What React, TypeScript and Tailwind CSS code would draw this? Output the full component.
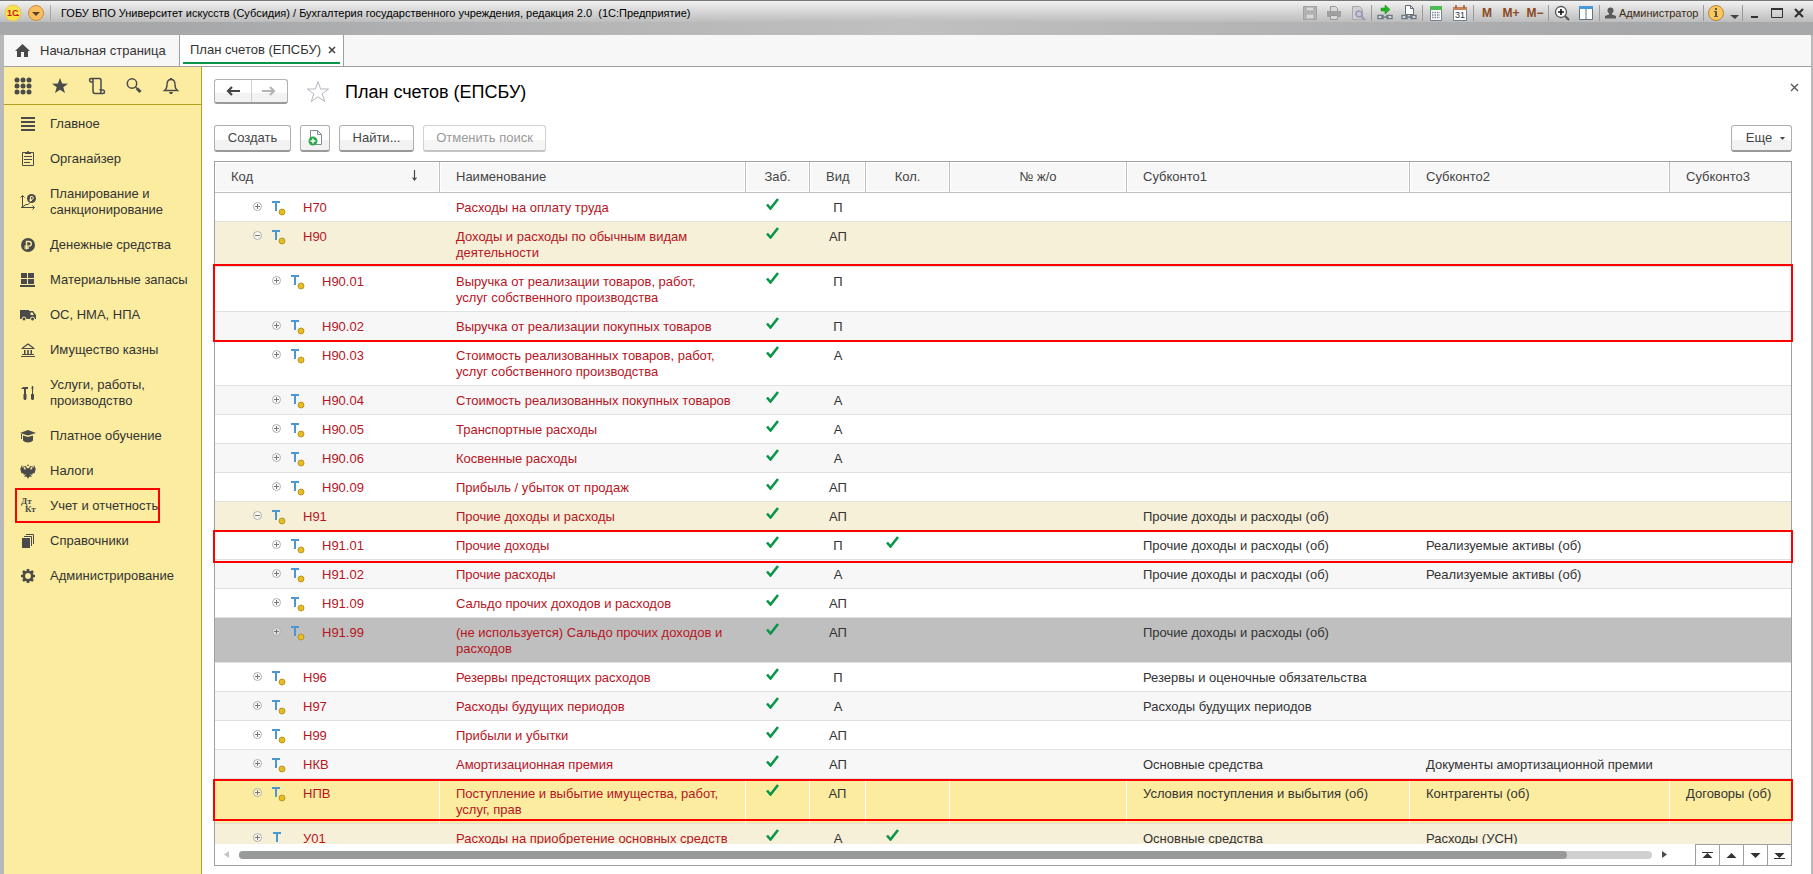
import { useState } from "react";
import type { ReactNode } from "react";

interface Account {
  code: string;
  name: string;
  kind: string;
  level: 0 | 1;
  open?: boolean;
  quantity?: boolean;
  plain?: boolean;
  tone?: "group" | "unused" | "selected";
  sub1?: string;
  sub2?: string;
  sub3?: string;
}

const ACCOUNTS: Account[] = [
  { code: "Н70", name: "Расходы на оплату труда", kind: "П", level: 0 },
  { code: "Н90", name: "Доходы и расходы по обычным видам деятельности", kind: "АП", level: 0, open: true, tone: "group" },
  { code: "Н90.01", name: "Выручка от реализации товаров, работ, услуг\u00a0собственного производства", kind: "П", level: 1 },
  { code: "Н90.02", name: "Выручка от реализации покупных товаров", kind: "П", level: 1 },
  { code: "Н90.03", name: "Стоимость реализованных товаров, работ, услуг\u00a0собственного производства", kind: "А", level: 1 },
  { code: "Н90.04", name: "Стоимость реализованных покупных товаров", kind: "А", level: 1 },
  { code: "Н90.05", name: "Транспортные расходы", kind: "А", level: 1 },
  { code: "Н90.06", name: "Косвенные расходы", kind: "А", level: 1 },
  { code: "Н90.09", name: "Прибыль / убыток от продаж", kind: "АП", level: 1 },
  { code: "Н91", name: "Прочие доходы и расходы", kind: "АП", level: 0, open: true, tone: "group", sub1: "Прочие доходы и расходы (об)" },
  { code: "Н91.01", name: "Прочие доходы", kind: "П", level: 1, quantity: true, sub1: "Прочие доходы и расходы (об)", sub2: "Реализуемые активы (об)" },
  { code: "Н91.02", name: "Прочие расходы", kind: "А", level: 1, sub1: "Прочие доходы и расходы (об)", sub2: "Реализуемые активы (об)" },
  { code: "Н91.09", name: "Сальдо прочих доходов и расходов", kind: "АП", level: 1 },
  { code: "Н91.99", name: "(не используется) Сальдо прочих доходов и расходов", kind: "АП", level: 1, tone: "unused", sub1: "Прочие доходы и расходы (об)" },
  { code: "Н96", name: "Резервы предстоящих расходов", kind: "П", level: 0, sub1: "Резервы и оценочные обязательства" },
  { code: "Н97", name: "Расходы будущих периодов", kind: "А", level: 0, sub1: "Расходы будущих периодов" },
  { code: "Н99", name: "Прибыли и убытки", kind: "АП", level: 0 },
  { code: "НКВ", name: "Амортизационная премия", kind: "АП", level: 0, sub1: "Основные средства", sub2: "Документы амортизационной премии" },
  { code: "НПВ", name: "Поступление и выбытие имущества, работ, услуг, прав", kind: "АП", level: 0, tone: "selected", sub1: "Условия поступления и выбытия (об)", sub2: "Контрагенты (об)", sub3: "Договоры (об)" },
  { code: "У01", name: "Расходы на приобретение основных средств", kind: "А", level: 0, quantity: true, plain: true, tone: "group", sub1: "Основные средства", sub2: "Расходы (УСН)" },
];

// ─── Sidebar icons ────────────────────────────────
function Icon({ children }: { children: ReactNode }) {
  return (
    <svg width="16" height="16" viewBox="0 0 16 16" fill="#4a4a4a" className="shrink-0" aria-hidden="true">
      {children}
    </svg>
  );
}

const SECTIONS: { title: string; icon: ReactNode; marked?: boolean }[] = [
  { title: "Главное", icon: <Icon><path d="M1 1h14v2H1zM1 5h14v2H1zM1 9h14v2H1zM1 13h14v2H1z" /></Icon> },
  {
    title: "Органайзер",
    icon: (
      <Icon>
        <path d="M2.500 1.500h11v13h-11z" fill="none" stroke="#4a4a4a" />
        <path d="M5 3V1h2a1 1 0 0 1 2 0h2v2zM4 5h8v1H4zM4 8h8v1H4zM4 11h6v1H4z" />
      </Icon>
    ),
  },
  {
    title: "Планирование и санкционирование",
    icon: (
      <Icon>
        <path d="M2.500 2v12M1 13.500h13M0.500 3.500l2-2 2 2M12.500 11.500l2 2-2 2M3 12.500l3-2h2l2-2" fill="none" stroke="#4a4a4a" />
        <circle cx="11.500" cy="4.500" r="4.500" />
        <path d="M10.500 7.500v-5H12a1.400 1.400 0 0 1 0 2.800H9.500M9.500 6.500H12" fill="none" stroke="#fbeca0" />
      </Icon>
    ),
  },
  {
    title: "Денежные средства",
    icon: (
      <Icon>
        <circle cx="8" cy="8" r="7" />
        <path d="M6.500 12.500v-8H9a2.300 2.300 0 0 1 0 4.600H4.500M4.500 11H9" fill="none" stroke="#fbeca0" strokeWidth="1.400" />
      </Icon>
    ),
  },
  { title: "Материальные запасы", icon: <Icon><path d="M1 1h6v5H1zM8 1h6v5H8zM1 7h6v5H1zM8 7h6v5H8zM0 13h15v2H0z" /></Icon> },
  {
    title: "ОС, НМА, НПА",
    icon: (
      <Icon>
        <path d="M0 3h9v9H0zM9 4h4l3 4v4H9z" />
        <path d="M10.500 5.500h2l1.500 2.500h-3.500z" fill="#fbeca0" />
        <circle cx="4" cy="12" r="2" stroke="#fbeca0" />
        <circle cx="12.500" cy="12" r="2" stroke="#fbeca0" />
      </Icon>
    ),
  },
  {
    title: "Имущество казны",
    icon: (
      <Icon>
        <path d="M1.500 6.500h13M2.500 6L8 2l5.500 4M1 14.500h14M2 12.500h12" fill="none" stroke="#4a4a4a" strokeWidth="1.200" />
        <path d="M4 8h1.500v4H4zM7.200 8h1.600v4H7.200zM10.500 8H12v4h-1.500z" />
      </Icon>
    ),
  },
  {
    title: "Услуги, работы, производство",
    icon: (
      <Icon>
        <path d="M1 4l2-2h5v2H6v5H4V4zM3.500 9h3v5l-1 1h-1l-1-1zM11.500 3l.5-2h1l.5 2-.5 2v4h-1V5zM11 9h3v5l-1 1h-1l-1-1z" />
      </Icon>
    ),
  },
  {
    title: "Платное обучение",
    icon: (
      <Icon>
        <path d="M0 5l8-3 8 3-8 2.500zM3 7.500l5 1.500 5-1.500v5c-2 2.500-8 2.500-10 0zM1 6h1v5H1z" />
      </Icon>
    ),
  },
  {
    title: "Налоги",
    icon: (
      <Icon>
        <path d="M7 3l1-2 1 2zM6.500 4.500C6.500 3 4.500 2.500 4 4l1.500.5V7L4 6 3 2 2.500 5 1 2v3.500L0 5l1 3.500.5 2L3 10 4 12l2-1-2 3 2-.5L7 14l1 2 1-2 1-.5 2 .5-2-3 2 1 1-2 1.500.5.5-2 1-3.500-1 .5V2l-1.500 3L13 2l-1 4-1.500 1V4.500L12 4c-.500-1.500-2.500-1-2.500.5L8 5.500z" />
      </Icon>
    ),
  },
  {
    title: "Учет и отчетность",
    marked: true,
    icon: (
      <svg width="16" height="16" viewBox="0 0 16 16" className="shrink-0" aria-hidden="true" fill="#4a4a4a" fontFamily="Liberation Serif, serif" fontWeight="bold" fontSize="9">
        <text x="1" y="6">Дт</text>
        <text x="5" y="14">Кт</text>
      </svg>
    ),
  },
  {
    title: "Справочники",
    icon: (
      <Icon>
        <path d="M2 5h8v10H2z" />
        <path d="M4 3.500h7.500V13M6 1.500h7.500V11" fill="none" stroke="#4a4a4a" />
      </Icon>
    ),
  },
  {
    title: "Администрирование",
    icon: (
      <Icon>
        <circle cx="8" cy="8" r="4.200" fill="none" stroke="#4a4a4a" strokeWidth="2.600" />
        <path d="M8 1v3M8 12v3M1 8h3M12 8h3M3 3l2 2M11 11l2 2M13 3l-2 2M5 11l-2 2" stroke="#4a4a4a" strokeWidth="2.600" />
      </Icon>
    ),
  },
];

const TOOLS: { label: string; icon: ReactNode }[] = [
  {
    label: "Разделы",
    icon: (
      <g fill="#4a4a4a">
        {[3, 9, 15].map((y) => [3, 9, 15].map((x) => <circle key={`${x}-${y}`} cx={x} cy={y} r="2.500" />))}
      </g>
    ),
  },
  { label: "Избранное", icon: <path d="M9 1l2.100 5.500 5.900.2-4.700 3.600 1.700 5.700-5-3.300-5 3.300 1.700-5.700L1 6.700l5.900-.2z" fill="#4a4a4a" /> },
  {
    label: "История",
    icon: <path d="M5 5H3C1 4.500 1 1.500 3 1.500h8.500c1 0 1.500 1 1.500 2V13M3 1.500c1.500 0 2 1 2 2V14c0 1.500 1 2.500 2 2.500h8c2 0 2-3.500 0-3.500h-2.500c1 1 .500 3-1 3.500" fill="none" stroke="#4a4a4a" strokeWidth="1.500" />,
  },
  {
    label: "Поиск",
    icon: (
      <g fill="none" stroke="#4a4a4a">
        <circle cx="7" cy="6.500" r="4.700" strokeWidth="1.500" />
        <path d="M10.500 10l1.500 1.500" strokeWidth="1.500" />
        <path d="M12 11.500l3.500 3.500" strokeWidth="3" />
      </g>
    ),
  },
  {
    label: "Оповещения",
    icon: (
      <g>
        <path d="M2.500 13.500c2-1.500 2.500-3 2.500-6C5 4.500 6.500 2.500 9 2.500s4 2 4 5c0 3 .500 4.500 2.500 6z" fill="none" stroke="#4a4a4a" strokeWidth="1.400" />
        <path d="M8 1h2v2H8zM7 15h4l-1 2H8z" fill="#4a4a4a" />
      </g>
    ),
  },
];

// ─── Window title bar ────────────────────────────────
function BarButton({ label, children, className = "w-6" }: { label: string; children: ReactNode; className?: string }) {
  return (
    <button type="button" aria-label={label} className={`flex h-5 shrink-0 items-center justify-center ${className}`}>
      {children}
    </button>
  );
}

function Divider() {
  return <span className="mx-px h-4 w-px shrink-0 bg-[#9a9a9a]" />;
}

function Glyph({ children }: { children: ReactNode }) {
  return (
    <svg width="16" height="16" viewBox="0 0 16 16" aria-hidden="true">
      {children}
    </svg>
  );
}

function ChainLinks() {
  return (
    <g fill="none">
      <path d="M1 10.500h5v3H1zM10 10.500h5v3h-5z" fill="#fff" stroke="#6d7780" strokeWidth="1.400" />
      <path d="M4 12h8" stroke="#6d7780" strokeWidth="1.400" />
    </g>
  );
}

function TitleBar() {
  return (
    <header className="flex h-[22px] shrink-0 items-center border-t border-[#767676] bg-linear-to-b from-[#f2f2f2] via-[#d6d6d6] to-[#bdbdbd] pt-[2px] pl-1">
      <svg width="18" height="18" viewBox="0 0 18 18" className="mr-[5px] shrink-0" aria-hidden="true">
        <circle cx="9" cy="9" r="8" fill="#fbe24a" stroke="#e0c860" />
        <text x="3" y="12" fontFamily="Liberation Sans, sans-serif" fontWeight="bold" fontSize="9" fill="#d0201c">1С</text>
        <path d="M11 11.500h4" stroke="#d0201c" />
      </svg>
      <BarButton label="Главное меню" className="w-[18px]">
        <svg width="18" height="18" viewBox="0 0 18 18" aria-hidden="true">
          <circle cx="9" cy="9" r="7.500" fill="#fbbf62" stroke="#c98d3c" />
          <path d="M5 8h8l-4 4z" fill="#5b4426" />
        </svg>
      </BarButton>
      <span className="mr-[10px] ml-[5px] h-4 w-px shrink-0 bg-[#a8a8a8]" />
      <h1 className="min-w-0 flex-1 truncate text-[11px] text-black">
        ГОБУ ВПО Университет искусств (Субсидия) / Бухгалтерия государственного учреждения, редакция 2.0&nbsp; (1С:Предприятие)
      </h1>
      <BarButton label="Сохранить">
        <Glyph>
          <path d="M1.500 1.500h13v13h-13z" fill="#b4b4b4" stroke="#a0a0a0" />
          <path d="M4 2h8v4H4zM4 9h8v5H4z" fill="#d8d8d8" stroke="#a6a6a6" />
        </Glyph>
      </BarButton>
      <BarButton label="Печать">
        <Glyph>
          <path d="M1 6h14v6H1z" fill="#a0a0a0" />
          <path d="M4.500 6V1.500h5l2 2V6M4.500 10.500h7v4h-7z" fill="#d8d8d8" stroke="#969696" />
        </Glyph>
      </BarButton>
      <BarButton label="Просмотр">
        <Glyph>
          <path d="M2.500 1.500h7l3 3v10h-10z" fill="#d0d0d0" stroke="#a8a8a8" />
          <circle cx="9" cy="9" r="3" fill="#c9c4dc" stroke="#9d96b4" strokeWidth="1.500" />
          <path d="M11 11l4 4" stroke="#9d96b4" strokeWidth="2" />
        </Glyph>
      </BarButton>
      <Divider />
      <BarButton label="Перейти по ссылке">
        <Glyph>
          <path d="M4 3h4V0l5 4.500L8 9V6H4z" fill="#22b422" stroke="#148014" strokeWidth=".5" />
          <ChainLinks />
        </Glyph>
      </BarButton>
      <BarButton label="Получить ссылку">
        <Glyph>
          <path d="M4.500 9.500V.5h5l3 3v6z" fill="#fff" stroke="#5d6b7a" />
          <path d="M9.500 .5v3h3" fill="none" stroke="#5d6b7a" />
          <ChainLinks />
        </Glyph>
      </BarButton>
      <Divider />
      <BarButton label="Калькулятор">
        <Glyph>
          <path d="M2.500 1.500h11v14h-11z" fill="#fff" stroke="#718391" />
          <path d="M2 1h12v4H2z" fill="#4dbb53" />
          <path d="M4 7.500h8M4 10h8M4 12.500h8" stroke="#7c8790" strokeWidth="1.500" strokeDasharray="1.500 1" />
        </Glyph>
      </BarButton>
      <BarButton label="Календарь">
        <Glyph>
          <path d="M1.500 2.500h13v13h-13z" fill="#fff" stroke="#718391" />
          <path d="M1 2h14v3H1z" fill="#c58457" />
          <path d="M4 0v3M12 0v3" stroke="#9b5b33" strokeWidth="1.500" />
          <text x="3" y="13" fontFamily="Liberation Sans, sans-serif" fontSize="9" fill="#333">31</text>
        </Glyph>
      </BarButton>
      <Divider />
      <BarButton label="M"><span className="text-xs font-bold text-[#8a4a22]">M</span></BarButton>
      <BarButton label="M+"><span className="text-xs font-bold text-[#8a4a22]">M+</span></BarButton>
      <BarButton label="M-"><span className="text-xs font-bold text-[#8a4a22]">M−</span></BarButton>
      <Divider />
      <BarButton label="Масштаб">
        <Glyph>
          <circle cx="7" cy="7" r="5.500" fill="#fff" stroke="#555" strokeWidth="1.300" />
          <path d="M4 7h6M7 4v6" stroke="#111" strokeWidth="1.600" />
          <path d="M11 11l4 4" stroke="#555" strokeWidth="2.200" />
        </Glyph>
      </BarButton>
      <BarButton label="Панели">
        <Glyph>
          <path d="M1.500 1.500h13v13h-13z" fill="#fff" stroke="#5d7385" />
          <path d="M1 1h14v3H1z" fill="#4897d6" />
          <path d="M8 4v11" stroke="#5d7385" />
        </Glyph>
      </BarButton>
      <Divider />
      <button type="button" className="flex h-5 w-[101px] shrink-0 items-center gap-[3px] pl-1 text-[11px] text-[#3b2a12]">
        <svg width="11" height="12" viewBox="0 0 11 12" fill="#5a5a5a" className="shrink-0" aria-hidden="true">
          <circle cx="5.500" cy="3.500" r="3" />
          <path d="M4 6h3v1.500l4 1.500v2.500H0V9l4-1.500z" />
        </svg>
        Администратор
      </button>
      <Divider />
      <BarButton label="Информация" className="w-[22px]">
        <svg width="18" height="18" viewBox="0 0 18 18" aria-hidden="true">
          <circle cx="9" cy="9" r="7.500" fill="#fcc75c" stroke="#b9863a" />
          <path d="M8 4h2v2H8zM7 7h3v5h1v1H7v-1h1V8H7z" fill="#5f5747" />
        </svg>
      </BarButton>
      <BarButton label="Меню" className="w-[14px]">
        <svg width="9" height="14" viewBox="0 0 9 14" aria-hidden="true"><path d="M0 9h9l-4 4z" fill="#444" /></svg>
      </BarButton>
      <Divider />
      <div className="flex pr-[3px]">
        <BarButton label="Свернуть" className="w-[22px]">
          <svg width="12" height="12" viewBox="0 0 12 12" aria-hidden="true"><path d="M2 9h7v2H2z" fill="#333" /></svg>
        </BarButton>
        <BarButton label="Развернуть" className="w-[22px]">
          <svg width="12" height="12" viewBox="0 0 12 12" aria-hidden="true"><path d="M.5 1.500h11v9H.5z" fill="none" stroke="#333" /><path d="M0 1h12v2H0z" fill="#333" /></svg>
        </BarButton>
        <BarButton label="Закрыть" className="w-[22px]">
          <svg width="12" height="12" viewBox="0 0 12 12" aria-hidden="true"><path d="M2 2l8 8M10 2l-8 8" stroke="#333" strokeWidth="2.200" /></svg>
        </BarButton>
      </div>
    </header>
  );
}

// ─── Section panel ────────────────────────────────
function Sidebar() {
  return (
    <aside className="w-[198px] shrink-0 border-r border-[#b5a01e] bg-[#fbeca0]">
      <div className="flex h-[38px] items-center border-b border-[#b5a01e]">
        {TOOLS.map((tool) => (
          <button key={tool.label} type="button" aria-label={tool.label} className="flex w-[37px] justify-center">
            <svg width="18" height="18" viewBox="0 0 18 18" aria-hidden="true">{tool.icon}</svg>
          </button>
        ))}
      </div>
      <nav className="flex flex-col pt-px">
        {SECTIONS.map((section) => (
          <a key={section.title} href="#" className="relative flex items-center gap-[14px] pt-[10px] pr-12 pb-[9px] pl-4 whitespace-nowrap text-[#333]">
            {section.icon}
            <span className={section.title.length > 20 ? "whitespace-normal" : ""}>{section.title}</span>
            {section.marked && <span className="absolute inset-y-0 left-[11px] w-[145px] border-2 border-[#ff0000]" />}
          </a>
        ))}
      </nav>
    </aside>
  );
}

// ─── Account table ────────────────────────────────
function Check() {
  return (
    <svg width="13" height="12" viewBox="0 0 13 12" role="img" aria-label="Да" className="block">
      <path d="M1 6.500l3.500 4L12 1" fill="none" stroke="#0a9648" strokeWidth="2.600" />
    </svg>
  );
}

function Expander({ open }: { open?: boolean }) {
  return (
    <svg width="9" height="9" viewBox="0 0 9 9" aria-hidden="true" className="mt-[2px] block">
      <circle cx="4.500" cy="4.500" r="4" fill="#fff" fillOpacity=".5" stroke="#a8a8a8" strokeWidth=".9" />
      <path d={open ? "M2 4.500h5" : "M2 4.500h5M4.500 2v5"} stroke="#777" />
    </svg>
  );
}

function AccountIcon({ plain }: { plain?: boolean }) {
  return (
    <svg width="14" height="15" viewBox="0 0 14 15" aria-hidden="true" className="mt-px block shrink-0">
      <path d={plain ? "M1 0h8v2H6v8H4V2H1z" : "M0 0h8v2H5v8H3V2H0z"} fill="#4c97d0" />
      {!plain && <circle cx="10" cy="11" r="3" fill="#e5bc24" stroke="#b3921f" strokeWidth=".9" />}
    </svg>
  );
}

function rowTone(account: Account, index: number) {
  if (account.tone === "group") return "bg-[#f7f0d9]";
  if (account.tone === "unused") return "bg-[#bfbfbf]";
  if (account.tone === "selected") return "bg-[#fbeca0]";
  return index % 2 ? "bg-[#f7f7f7]" : "bg-white";
}

const HEAD = "h-[31px] border-r border-b border-[#c0c0c0] bg-[#f7f7f7] px-4 font-normal shadow-[inset_0_0_0_1px_#fff]";

function AccountTable() {
  const [selected, setSelected] = useState("НПВ");

  return (
    <table className="w-full table-fixed border-separate border-spacing-0 text-left">
      <colgroup>
        <col className="w-[225px]" />
        <col className="w-[306px]" />
        <col className="w-[64px]" />
        <col className="w-[56px]" />
        <col className="w-[84px]" />
        <col className="w-[177px]" />
        <col className="w-[283px]" />
        <col className="w-[260px]" />
        <col />
      </colgroup>
      <thead className="text-[#444]">
        <tr>
          <th className={HEAD}>
            <span className="flex items-center justify-between">
              Код
              <svg width="7" height="12" viewBox="0 0 7 12" aria-hidden="true" className="mr-[5px] mb-[2px]">
                <path d="M3.500 0v10M1.500 7.500l2 2.500 2-2.500" fill="none" stroke="#444" strokeWidth="1.200" />
              </svg>
            </span>
          </th>
          <th className={HEAD}>Наименование</th>
          <th className={`${HEAD} text-center`}>Заб.</th>
          <th className={`${HEAD} text-center`}>Вид</th>
          <th className={`${HEAD} text-center`}>Кол.</th>
          <th className={`${HEAD} text-center`}>№ ж/о</th>
          <th className={HEAD}>Субконто1</th>
          <th className={HEAD}>Субконто2</th>
          <th className="h-[31px] border-b border-[#c0c0c0] bg-[#f7f7f7] px-4 font-normal">Субконто3</th>
        </tr>
      </thead>
      <tbody>
        {ACCOUNTS.map((account, i) => {
          const line = account.tone === "selected" ? "border-r border-r-white last:border-r-0" : "";
          const base = `border-b border-b-[#e0e0e0] pb-[5px] align-top ${line}`;
          const cell = `${base} pt-[7px]`;
          return (
            <tr
              key={account.code}
              aria-selected={selected === account.code}
              onClick={() => setSelected(account.code)}
              className={`${rowTone(account, i)} text-[#333]`}
            >
              <td className={cell}>
                <div className={`flex text-[#b8141e] ${account.level ? "pl-[57px]" : "pl-[38px]"}`}>
                  <Expander open={account.open} />
                  <span className="w-[10px]" />
                  <AccountIcon plain={account.plain} />
                  <span className="pl-[17px]">{account.code}</span>
                </div>
              </td>
              <td className={`${cell} pr-3 pl-4 text-[#b8141e]`}>{account.name}</td>
              <td className={`${base} pt-[5px] pl-5`}><Check /></td>
              <td className={`${cell} text-center`}>{account.kind}</td>
              <td className={`${base} pt-[5px] pl-5`}>{account.quantity && <Check />}</td>
              <td className={cell} />
              <td className={`${cell} pl-4`}>{account.sub1}</td>
              <td className={`${cell} pl-4`}>{account.sub2}</td>
              <td className={`${cell} pl-4`}>{account.sub3}</td>
            </tr>
          );
        })}
      </tbody>
    </table>
  );
}

const PAGERS = [
  { label: "В начало", path: "M0 0h11v1H0zM5.500 1l5 5h-10z" },
  { label: "Вверх", path: "M5.500 1l5 5h-10z" },
  { label: "Вниз", path: "M5.500 6l5-5h-10z" },
  { label: "В конец", path: "M0 6h11v1H0zM5.500 6l5-5h-10z" },
];

function TableFooter() {
  return (
    <div className="flex h-[21px] shrink-0 bg-white">
      <div className="flex flex-1 items-center">
        <svg width="5" height="7" viewBox="0 0 5 7" className="mr-[10px] ml-[9px]" aria-hidden="true"><path d="M5 0v7L0 3.500z" fill="#c4c4c4" /></svg>
        <div className="h-2 flex-1 rounded-full bg-[#d0d0d0]">
          <div className="h-2 w-[94%] rounded-full bg-[#989a99]" />
        </div>
        <svg width="5" height="7" viewBox="0 0 5 7" className="mr-[28px] ml-[10px]" aria-hidden="true"><path d="M0 0v7l5-3.500z" fill="#4a4a4a" /></svg>
      </div>
      {PAGERS.map((pager) => (
        <button key={pager.label} type="button" aria-label={pager.label} className="flex w-6 items-center justify-center border-t border-l border-[#a0a0a0]">
          <svg width="11" height="7" viewBox="0 0 11 7" fill="#333" aria-hidden="true"><path d={pager.path} /></svg>
        </button>
      ))}
    </div>
  );
}

const BUTTON =
  "flex h-[27px] items-center justify-center rounded-[3px] border border-b-2 border-[#b0b0b0] border-b-[#999] bg-linear-to-b from-white from-60% to-[#f2f2f2] to-60% text-[#444]";

export default function App() {
  return (
    <div className="flex h-screen flex-col overflow-hidden bg-[#b8b8b8] font-['Liberation_Sans',Arial,sans-serif] text-[13px] leading-4">
      <TitleBar />
      <div className="h-[13px] shrink-0 bg-linear-to-r from-[#a7a8aa] from-10% via-[#c0c0c0] via-50% to-[#a7a8aa] to-90%" />

      <div className="mr-[2px] ml-1 flex min-h-0 flex-1 flex-col bg-white">
        {/* Open pages */}
        <div className="flex h-8 shrink-0 border-b border-[#a0a0a0] bg-[#f7f7f7]">
          <button type="button" className="flex w-[175px] items-center gap-[10px] pl-[11px] text-[#333]">
            <svg width="15" height="13" viewBox="0 0 15 13" fill="#4a4a4a" aria-hidden="true">
              <path d="M7.500 0L15 7h-2v6H9V8H6v5H2V7H0z" />
            </svg>
            Начальная страница
          </button>
          <div className="flex w-[165px] flex-col border-x border-[#a0a0a0] bg-white px-[3px] text-[#333]">
            <div className="flex flex-1 items-center justify-between pt-[3px] pr-1 pl-[7px]">
              <button type="button">План счетов (ЕПСБУ)</button>
              <button type="button" aria-label="Закрыть вкладку">
                <svg width="8" height="8" viewBox="0 0 8 8" aria-hidden="true"><path d="M1 1l6 6M7 1L1 7" stroke="#444" strokeWidth="1.600" /></svg>
              </button>
            </div>
            <div className="mb-[2px] h-[2px] bg-[#0a9648]" />
          </div>
        </div>

        <div className="flex min-h-0 flex-1">
          <Sidebar />

          <main className="flex min-w-0 flex-1 flex-col pr-[19px] pb-2 pl-3">
            <div className="mt-3 flex h-[25px] items-center">
              <div className="flex h-[25px] w-[74px] rounded-[3px] border border-b-2 border-[#b0b0b0] border-b-[#999] bg-linear-to-b from-white from-60% to-[#f2f2f2] to-60%">
                <button type="button" aria-label="Назад" className="flex flex-1 items-center justify-center border-r border-[#d0d0d0]">
                  <svg width="14" height="10" viewBox="0 0 14 10" fill="none" stroke="#444" strokeWidth="2.200" aria-hidden="true"><path d="M14 5H2M6 1L2 5l4 4" /></svg>
                </button>
                <button type="button" aria-label="Вперед" disabled className="flex flex-1 items-center justify-center">
                  <svg width="14" height="10" viewBox="0 0 14 10" fill="none" stroke="#b4b4b4" strokeWidth="2.200" aria-hidden="true"><path d="M0 5h12M8 1l4 4-4 4" /></svg>
                </button>
              </div>
              <button type="button" aria-label="В избранное" className="ml-[18px]">
                <svg width="24" height="23" viewBox="0 0 24 23" fill="none" stroke="#b5b5c0" aria-hidden="true">
                  <path d="M12 1.500l2.600 7.500h8l-6.400 4.800 2.500 7.700L12 16.800l-6.700 4.700 2.500-7.700L1.400 9h8z" />
                </svg>
              </button>
              <h2 className="ml-[15px] text-lg text-black">План счетов (ЕПСБУ)</h2>
              <button type="button" aria-label="Закрыть" className="-mr-[7px] mb-2 ml-auto">
                <svg width="9" height="9" viewBox="0 0 9 9" aria-hidden="true"><path d="M1 1l7 7M8 1L1 8" stroke="#555" strokeWidth="1.300" /></svg>
              </button>
            </div>

            <div className="mt-[21px] flex gap-[9px]">
              <button type="button" className={`${BUTTON} w-[77px]`}>Создать</button>
              <button type="button" aria-label="Создать копированием" className={`${BUTTON} w-[30px]`}>
                <svg width="15" height="16" viewBox="0 0 15 16" aria-hidden="true">
                  <path d="M2.500 .5h7l4 4v10h-11z" fill="#fff" stroke="#7f8c99" />
                  <path d="M9.500 .5v4h4" fill="none" stroke="#7f8c99" />
                  <circle cx="5" cy="11" r="4.500" fill="#2fa84a" />
                  <path d="M2.500 11h5M5 8.500v5" stroke="#fff" strokeWidth="1.400" />
                </svg>
              </button>
              <button type="button" className={`${BUTTON} w-[75px]`}>Найти...</button>
              <button type="button" disabled className="flex h-[27px] w-[123px] items-center justify-center rounded-[3px] border border-b-2 border-[#d0d0d0] border-b-[#c4c4c4] bg-linear-to-b from-white from-60% to-[#f5f5f5] to-60% text-[#999]">
                Отменить поиск
              </button>
              <button type="button" className={`${BUTTON} ml-auto w-[61px] gap-2 pl-2`}>
                Еще
                <svg width="5" height="3" viewBox="0 0 5 3" aria-hidden="true"><path d="M0 0h5L2.500 3z" fill="#444" /></svg>
              </button>
            </div>

            <div className="relative mt-[9px] flex min-h-0 flex-1 flex-col border border-[#a0a0a0]">
              <div className="min-h-0 flex-1 overflow-hidden">
                <AccountTable />
              </div>
              <TableFooter />

              {/* Highlighted account groups */}
              <div className="pointer-events-none absolute -inset-x-[2px] top-[102px] h-[78px] border-2 border-[#ff0000]" />
              <div className="pointer-events-none absolute -inset-x-[2px] top-[368px] h-[33px] border-2 border-[#ff0000]" />
              <div className="pointer-events-none absolute -inset-x-[2px] top-[617px] h-[42px] border-2 border-[#ff0000]" />
            </div>
          </main>
        </div>
      </div>
    </div>
  );
}
